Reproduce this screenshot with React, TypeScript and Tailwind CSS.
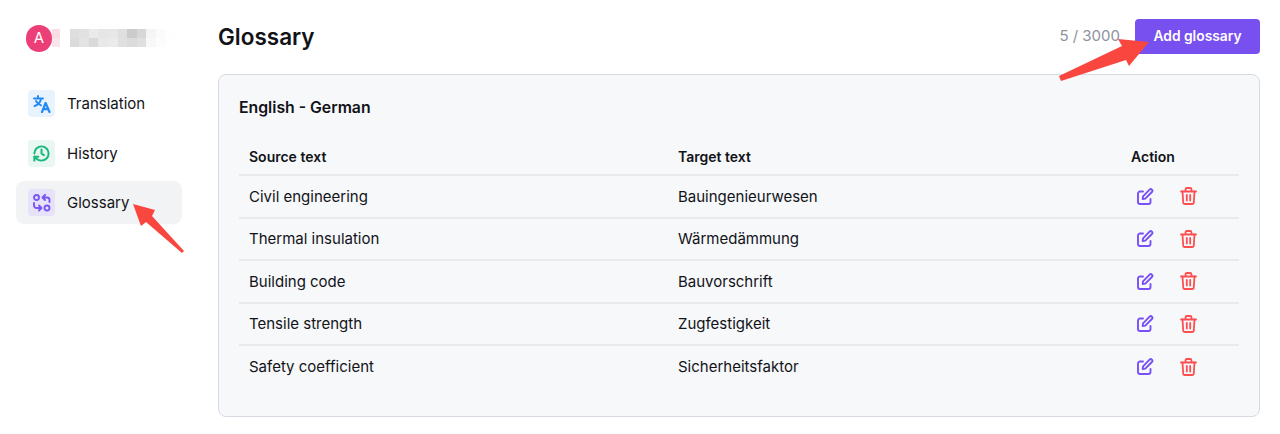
const rows = [
  ["Civil engineering", "Bauingenieurwesen"],
  ["Thermal insulation", "Wärmedämmung"],
  ["Building code", "Bauvorschrift"],
  ["Tensile strength", "Zugfestigkeit"],
  ["Safety coefficient", "Sicherheitsfaktor"],
];

// blurred user name, two rows of blocks
const mosaic = [
  ["#fbdbe4", "#ffffff", "#dedede", "#e1e1e1", "#eaeaea", "#e6e6e6", "#e7e7e7", "#dfdfdf", "#cbcbcb", "#d7d7d7", "#f5f5f5", "#fbfbfb", "#fefefe"],
  ["#f9e6ec", "#ffffff", "#dbdbdb", "#e3e3e3", "#d9d9d9", "#e8e8e8", "#ebebeb", "#e0e0e0", "#dbdbdb", "#dfdfdf", "#f8f8f8", "#fcfcfc", "#ffffff"],
];

function TranslationIcon() {
  return (
    <svg width="18" height="18" viewBox="0 0 18 18" fill="none" stroke="#2489f4" strokeWidth="1.9" strokeLinecap="round" strokeLinejoin="round">
      <path d="M1 3.500h9M5 1v2.500M8 3.500C7.500 7 5 9.800 1.500 11.200M3 6c1 2 2.600 3.400 5 4.300" />
      <path d="M9 17l3.600-9 3.900 9M10.200 14.200h5.200" strokeWidth="2.200" />
    </svg>
  );
}

function HistoryIcon() {
  return (
    <svg width="19" height="19" viewBox="0 0 24 24" fill="none" stroke="#18b97a" strokeWidth="2.500" strokeLinecap="round" strokeLinejoin="round">
      <path d="M3 12a9 9 0 1 1 9 9 9.750 9.750 0 0 1-6.740-2.740L3 16" />
      <path d="M3 21v-5h5" />
      <path d="M12 7v5l3 2" />
    </svg>
  );
}

function GlossaryIcon() {
  return (
    <svg width="18" height="18" viewBox="0 0 18 18" fill="none" stroke="#7c56f0" strokeWidth="1.9" strokeLinecap="round" strokeLinejoin="round">
      <circle cx="3.500" cy="3.500" r="2.500" />
      <circle cx="14" cy="14" r="2.500" />
      <path d="M9.500 3.500H14a2.500 2.500 0 0 1 2.500 2.500v2M12 1 9.500 3.500 12 6" />
      <path d="M1 9v2.500A2.500 2.500 0 0 0 3.500 14H8M6 11.500 8.500 14 6 16.500" />
    </svg>
  );
}

function EditIcon() {
  return (
    <svg width="17" height="17" viewBox="0 0 17 17" fill="none" stroke="#7850f5" strokeWidth="1.900" strokeLinecap="round" strokeLinejoin="round">
      <path d="M6 3.500H3A2 2 0 0 0 1 5.500V14a2 2 0 0 0 2 2h8.500a2 2 0 0 0 2-2v-3" />
      <path d="M6 8.300 12.600 1.700a1.600 1.600 0 0 1 2.300 2.300L8.300 10.600 5.700 11Z" />
    </svg>
  );
}

function TrashIcon() {
  return (
    <svg width="17" height="18" viewBox="0 0 17 18" fill="none" stroke="#fb4f50" strokeWidth="1.800" strokeLinecap="round" strokeLinejoin="round">
      <path d="M1 4.500h15M5.500 4.500V2.500A1.500 1.500 0 0 1 7 1h3a1.500 1.500 0 0 1 1.500 1.500v2" />
      <path d="M2.500 4.500l.7 10.700A1.800 1.800 0 0 0 5 17h7a1.800 1.800 0 0 0 1.800-1.800l.7-10.700" />
      <path d="M6.800 8v5.500M10.200 8v5.500" />
    </svg>
  );
}

export default function App() {
  return (
    <div className="relative flex h-[434px] w-[1280px] overflow-hidden bg-white font-['Inter',sans-serif] text-[#111318]">
      <aside className="w-[218px] shrink-0 pl-4 pr-9 pt-[24px]">
        <div className="flex h-[28px] items-center pl-2.5">
          <div className="flex h-[27px] w-[26px] shrink-0 items-center justify-center rounded-full bg-[#ec3f78] text-[15px] text-white">A</div>
          <div className="flex h-[18px] flex-col">
            {mosaic.map((row, r) => (
              <div key={r} className="flex h-[9px]">
                {row.map((c, i) => (
                  <div key={i} className={i === 0 ? "h-full w-[8px]" : "h-full w-[9.6px]"} style={{ backgroundColor: c }} />
                ))}
              </div>
            ))}
          </div>
        </div>
        <nav className="mt-[30px] flex flex-col gap-[6.5px]">
          <div className="flex h-[43px] items-center gap-3 rounded-lg px-3 text-[15px]">
            <span className="flex h-[27px] w-[27px] items-center justify-center rounded bg-[#e9f3fe]">
              <TranslationIcon />
            </span>
            <span className="pt-0.5">Translation</span>
          </div>
          <div className="flex h-[43px] items-center gap-3 rounded-lg px-3 text-[15px]">
            <span className="flex h-[27px] w-[27px] items-center justify-center rounded bg-[#e9f7f2]">
              <HistoryIcon />
            </span>
            <span className="pt-0.5">History</span>
          </div>
          <div className="flex h-[43px] items-center gap-3 rounded-lg bg-[#f2f3f5] px-3 text-[15px]">
            <span className="flex h-[27px] w-[27px] items-center justify-center rounded bg-[#e6e2f9]">
              <GlossaryIcon />
            </span>
            <span className="pt-0.5">Glossary</span>
          </div>
        </nav>
      </aside>

      <main className="w-[1042px] pt-[19px]">
        <header className="flex h-[35px] items-center justify-between">
          <h1 className="text-[22.5px] font-semibold">Glossary</h1>
          <div className="flex items-center gap-[15px]">
            <span className="text-[15px] text-[#8c929c]">5 / 3000</span>
            <button className="h-[35px] w-[125px] rounded bg-[#7850f0] text-[13.8px] font-semibold text-white">Add glossary</button>
          </div>
        </header>

        <section className="mt-5 h-[343px] rounded-lg border border-[#d5dbe0] bg-[#f7f8fa] px-5 pt-[23px]">
          <h2 className="text-[15.8px] font-semibold leading-5">English - German</h2>
          <table className="mt-[19px] w-[1000px] table-fixed text-left text-[15px]">
            <thead>
              <tr className="h-[38px] border-b-2 border-[#e8eaed] text-[14px]">
                <th className="w-[439px] pl-2.5 pt-px font-semibold">Source text</th>
                <th className="w-[453px] pt-px font-semibold">Target text</th>
                <th className="pt-px font-semibold">Action</th>
              </tr>
            </thead>
            <tbody>
              {rows.map(([source, target]) => (
                <tr key={source} className="h-[42.5px] border-b-2 border-[#e8eaed] last:border-b-0">
                  <td className="pl-2.5 pt-px">{source}</td>
                  <td className="pt-px">{target}</td>
                  <td>
                    <div className="flex items-center gap-[26px] pl-1.5">
                      <EditIcon />
                      <TrashIcon />
                    </div>
                  </td>
                </tr>
              ))}
            </tbody>
          </table>
        </section>
      </main>

      {/* red annotation arrows drawn on top of the screenshot */}
      <svg className="absolute left-0 top-0 h-[434px] w-[1280px]" viewBox="0 0 1280 434" fill="#f9473f">
        <polygon points="133,204 155,210 152,216 184,251 182,253 146,222 141,226" />
        <polygon points="1118,39 1149,42 1129,66 1126,60 1061,81 1059,76 1122,46" />
      </svg>
    </div>
  );
}
